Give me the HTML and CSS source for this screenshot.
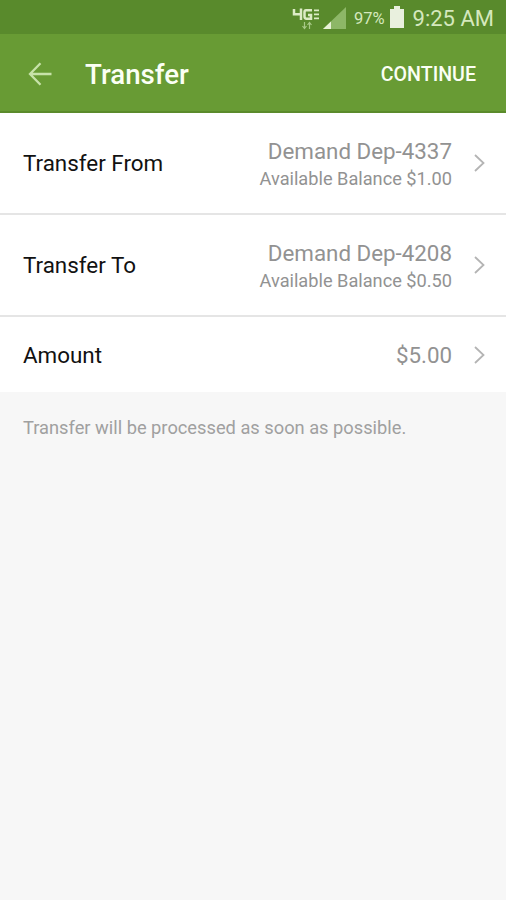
FILE: index.html
```html
<!DOCTYPE html>
<html lang="en">
<head>
<meta charset="utf-8">
<title>Transfer</title>
<link rel="stylesheet" href="styles.css">
</head>
<body>
<div class="status">
  <svg class="network" width="28" height="24" viewBox="0 0 28 24" fill="none" stroke="#dcebc5" stroke-width="2.5">
    <path d="M2 3V8.2H10M9 2.5V14M20 4.3H14Q12.5 4.3 12.5 6V10.5Q12.5 12.7 14.5 12.7H19V9H16"/>
    <path d="M22 4.3H27M22 8.3H27M22 12.3H27" stroke-width="1.7"/>
    <path d="M12.5 16V22M10.5 20L12.5 22.5L14.5 20M17.5 23V17M15.5 19L17.5 16.5L19.5 19" stroke="#a8c987" stroke-width="1.2"/>
  </svg>
  <svg class="signal" width="23" height="22" viewBox="0 0 23 22"><path d="M0 22L23 0V22Z" fill="#8db767"/><path d="M0 22L8 14.4V22Z" fill="#e7f1d6"/></svg>
  <span class="percent">97%</span>
  <svg class="battery" width="14" height="22" viewBox="0 0 14 22"><path d="M4 0H10V3H14V22H0V3H4Z" fill="#e9f0de"/></svg>
  <span class="clock">9:25 AM</span>
</div>
<header class="appbar">
  <svg class="back" width="24" height="24" viewBox="0 0 24 24" fill="none" stroke="#c7e2a9" stroke-width="2.3"><path d="M12.5 1.2L2 12L12.5 22.8M2 12H23.5"/></svg>
  <h1 class="title">Transfer</h1>
  <span class="continue">CONTINUE</span>
</header>
<main>
  <div class="row">
    <span class="label">Transfer From</span>
    <div class="value"><span class="account">Demand Dep-4337</span><span class="balance">Available Balance $1.00</span></div>
    <svg class="chevron" width="11" height="18" viewBox="0 0 11 18"><path d="M1 1L9.5 9L1 17"/></svg>
  </div>
  <div class="row">
    <span class="label">Transfer To</span>
    <div class="value"><span class="account">Demand Dep-4208</span><span class="balance">Available Balance $0.50</span></div>
    <svg class="chevron" width="11" height="18" viewBox="0 0 11 18"><path d="M1 1L9.5 9L1 17"/></svg>
  </div>
  <div class="row amount">
    <span class="label">Amount</span>
    <div class="value"><span class="account">$5.00</span></div>
    <svg class="chevron" width="11" height="18" viewBox="0 0 11 18"><path d="M1 1L9.5 9L1 17"/></svg>
  </div>
</main>
<p class="note">Transfer will be processed as soon as possible.</p>
</body>
</html>
```
FILE: styles.css
```css
* { box-sizing: border-box; }
body { margin: 0; min-height: 900px; background: #f7f7f7; font-family: Roboto, sans-serif; }
.status { height: 34px; padding: 2px 12px 0 0; display: flex; align-items: center; justify-content: flex-end; background: #598a2c; color: #d5e8bd; white-space: nowrap; }
.network { margin-right: 3px; }
.signal { margin-right: 8px; }
.percent { font-size: 16.5px; margin-right: 5px; }
.battery { margin: -2px 9px 0 0; }
.clock { font-size: 22px; }
.appbar { height: 79px; padding: 0 30px 0 28px; display: flex; align-items: center; background: #689b34; border-bottom: 2px solid #5b8b2b; color: #fbfff4; }
.back { margin-top: 2px; }
.title { margin: 5px 0 0 33px; font-size: 27.7px; line-height: 32px; font-weight: 500; }
.continue { margin: 4px 0 0 auto; font-size: 19.6px; font-weight: 500; }
.row { height: 102px; padding: 0 21px 0 23px; display: flex; align-items: center; background: #fff; border-bottom: 2px solid #e5e5e5; }
.amount { height: 75px; border-bottom: 0; }
.label { font-size: 22.4px; color: #111; }
.value { margin-left: auto; padding-top: 2px; display: flex; flex-direction: column; align-items: flex-end; color: #929292; }
.amount .value { padding-top: 0; }
.account { font-size: 22.35px; line-height: 28px; }
.balance { font-size: 18.2px; line-height: 27px; }
.chevron { margin-left: 22px; fill: none; stroke: #b4b4b4; stroke-width: 1.8; }
.note { margin: 25px 23px; font-size: 18.27px; line-height: 22px; color: #a0a0a0; }
```
